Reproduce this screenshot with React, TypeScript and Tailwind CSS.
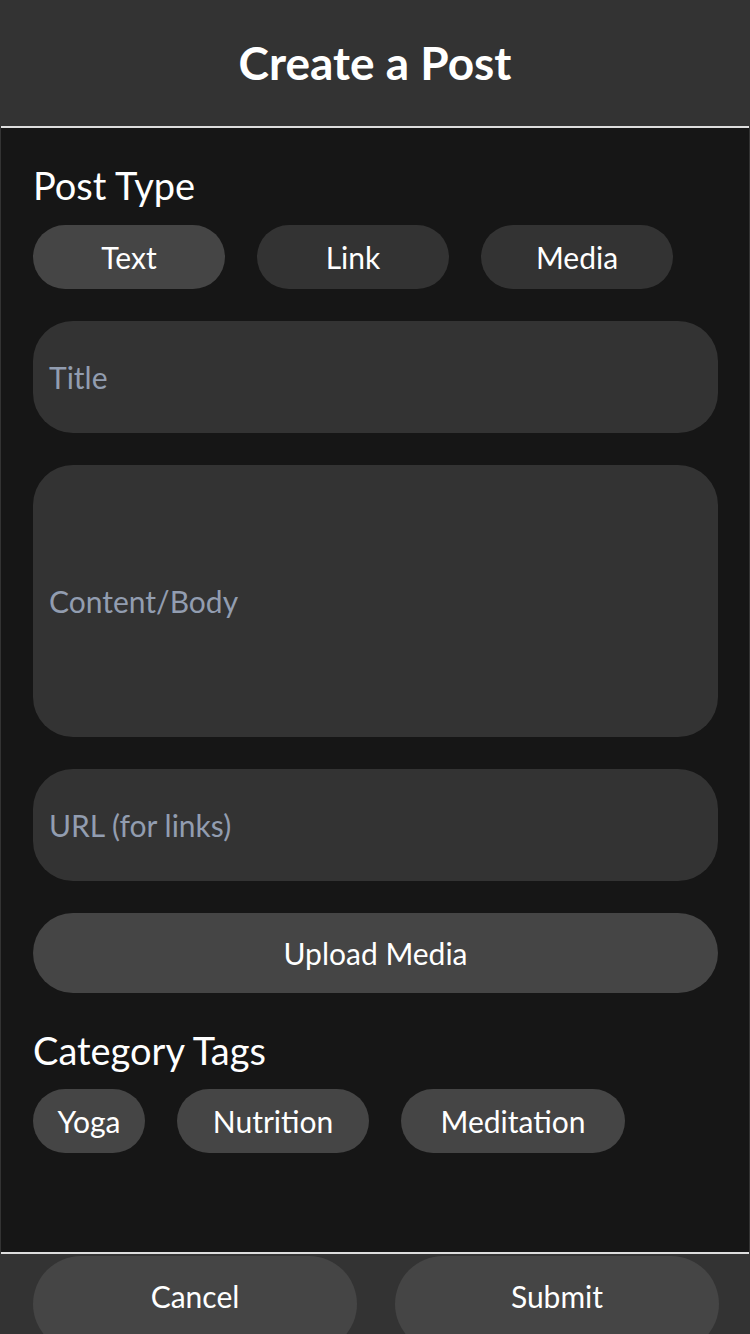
import React from "react";

const font = { fontFamily: 'Lato, "Noto Sans", sans-serif' };

export default function App() {
  return (
    <div
      className="w-[750px] h-[1334px] overflow-hidden bg-[#161616] border-x border-[#333333] flex flex-col text-white"
      style={font}
    >
      <header className="h-[128px] shrink-0 bg-[#333333] border-b-2 border-[#dddddd] flex items-center justify-center pb-[1px]">
        <h1 className="text-[46px] font-bold leading-none">Create a Post</h1>
      </header>

      <main className="flex-1 pl-[32px] pr-[31px] pt-[32px] flex flex-col">
        <div className="h-[50px] flex items-center text-[38px] leading-none mb-[15px]">Post Type</div>
        <div className="flex gap-[32px]">
          <button className="w-[192px] h-[64px] rounded-full bg-[#454545] text-[30px] text-white">Text</button>
          <button className="w-[192px] h-[64px] rounded-full bg-[#333333] text-[30px] text-white">Link</button>
          <button className="w-[192px] h-[64px] rounded-full bg-[#333333] text-[30px] text-white">Media</button>
        </div>

        <div className="mt-[32px] h-[112px] rounded-[40px] bg-[#333333] flex items-center px-[16px] text-[30px] text-[#929db0]">
          Title
        </div>
        <div className="mt-[32px] h-[272px] rounded-[40px] bg-[#333333] flex items-center px-[16px] text-[30px] text-[#929db0]">
          Content/Body
        </div>
        <div className="mt-[32px] h-[112px] rounded-[40px] bg-[#333333] flex items-center px-[16px] text-[30px] text-[#929db0]">
          URL (for links)
        </div>
        <button className="mt-[32px] h-[80px] rounded-full bg-[#454545] text-[30px] text-white">Upload Media</button>

        <div className="mt-[32px] h-[50px] flex items-center text-[38px] leading-none mb-[14px]">Category Tags</div>
        <div className="flex gap-[32px]">
          <button className="w-[112px] h-[64px] rounded-full bg-[#454545] text-[30px] text-white">Yoga</button>
          <button className="w-[192px] h-[64px] rounded-full bg-[#454545] text-[30px] text-white">Nutrition</button>
          <button className="w-[224px] h-[64px] rounded-full bg-[#454545] text-[30px] text-white">Meditation</button>
        </div>
      </main>

      <footer className="h-[82px] shrink-0 bg-[#333333] border-t-2 border-[#dddddd] pl-[32px] pr-[30px] pt-[2px] flex justify-between items-start overflow-hidden">
        <button className="w-[324px] h-[96px] shrink-0 rounded-full bg-[#454545] text-[30px] text-white pb-[16px]">Cancel</button>
        <button className="w-[324px] h-[96px] shrink-0 rounded-full bg-[#454545] text-[30px] text-white pb-[16px]">Submit</button>
      </footer>
    </div>
  );
}
